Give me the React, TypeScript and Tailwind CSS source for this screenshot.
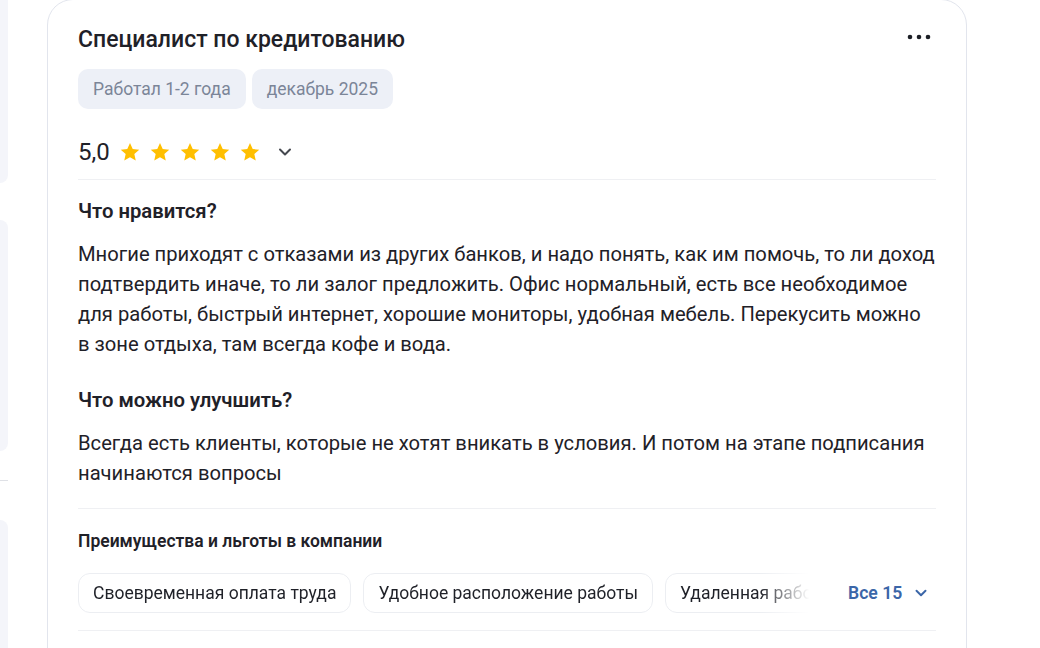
import React from 'react';
import { ChevronDown } from 'lucide-react';

const benefits = ["Своевременная оплата труда", "Удобное расположение работы", "Удаленная работа"];

const likedLines = [
    "Многие приходят с отказами из других банков, и надо понять, как им помочь, то ли доход",
    "подтвердить иначе, то ли залог предложить. Офис нормальный, есть все необходимое",
    "для работы, быстрый интернет, хорошие мониторы, удобная мебель. Перекусить можно",
    "в зоне отдыха, там всегда кофе и вода.",
];

const improveLines = [
    "Всегда есть клиенты, которые не хотят вникать в условия. И потом на этапе подписания",
    "начинаются вопросы",
];

const Star: React.FC = () => (
    <svg width="22" height="22" viewBox="0 0 24 24" className="shrink-0">
        <path d="M12 2.2l2.95 6.55 7.15.72-5.38 4.78 1.55 7.02L12 17.63l-6.27 3.64 1.55-7.02L1.9 9.47l7.15-.72L12 2.2z" fill="#ffbf00" />
    </svg>
);

const MoreDots: React.FC = () => (
    <svg width="24" height="6" viewBox="0 0 24 6">
        <circle cx="3" cy="3" r="2.3" fill="#1c1f26" />
        <circle cx="12" cy="3" r="2.3" fill="#1c1f26" />
        <circle cx="21" cy="3" r="2.3" fill="#1c1f26" />
    </svg>
);

const Lines: React.FC<{ lines: string[] }> = ({ lines }) => (
    <p className="mt-[16px] -mr-[30px] text-[20.2px] leading-[30px]">
        {lines.map((l, i) => <span key={i} className="block whitespace-nowrap">{l}</span>)}
    </p>
);

export default function App() {
    return (
        <div className="h-[648px] w-[1040px] overflow-hidden bg-white flex text-[#1f2128]" style={{ fontFamily: 'Roboto, "Noto Sans", sans-serif' }}>
            {/* left column edge */}
            <div className="w-[8px] shrink-0 flex flex-col">
                <div className="h-[183px] bg-[#f4f5fa] rounded-br-[16px]" />
                <div className="mt-[37px] h-[231px] bg-[#f4f5fa] rounded-r-[16px]" />
                <div className="mt-[29px] h-px bg-[#dfe1e6]" />
                <div className="mt-[39px] flex-1 bg-[#f4f5fa] rounded-tr-[16px]" />
            </div>

            <div className="ml-[39px] w-[920px] shrink-0 h-[700px] -mt-[1px] border border-[#e2e5ed] rounded-t-[26px] px-[30px] pt-[26px]">
                <div className="flex items-center justify-between h-[28px]">
                    <h2 className="text-[23px] leading-[28px] font-medium">Специалист по кредитованию</h2>
                    <button className="mr-[5px] -mt-[6px]"><MoreDots /></button>
                </div>

                <div className="mt-[15px] flex gap-[6px]">
                    <span className="h-[40px] px-[15px] flex items-center rounded-[10px] bg-[#edf0f7] text-[17.5px] text-[#7b8598]">Работал 1-2 года</span>
                    <span className="h-[40px] px-[15px] flex items-center rounded-[10px] bg-[#edf0f7] text-[17.5px] text-[#7b8598]">декабрь 2025</span>
                </div>

                <div className="mt-[23px] h-[40px] flex items-center">
                    <span className="text-[24px] leading-none">5,0</span>
                    <div className="ml-[9px] flex gap-[8px]">
                        <Star /><Star /><Star /><Star /><Star />
                    </div>
                    <ChevronDown size={20} strokeWidth={2.4} className="ml-[14px] text-[#45484f]" />
                </div>

                <div className="mt-[7px] h-px bg-[#eff0f3]" />

                <h3 className="mt-[19px] text-[20.3px] leading-[24px] font-semibold">Что нравится?</h3>
                <Lines lines={likedLines} />

                <h3 className="mt-[29px] text-[20.3px] leading-[24px] font-semibold">Что можно улучшить?</h3>
                <Lines lines={improveLines} />

                <div className="mt-[20px] h-px bg-[#eff0f3]" />

                <h4 className="mt-[21px] text-[17.5px] leading-[22px] font-semibold">Преимущества и льготы в компании</h4>

                <div className="mt-[21px] flex items-center">
                    <div className="w-[731px] flex gap-[12px] overflow-hidden [mask-image:linear-gradient(to_right,black_calc(100%-50px),transparent)]">
                        {benefits.map(b => (
                            <span key={b} className="shrink-0 h-[40px] px-[14px] flex items-center rounded-[12px] border border-[#eceef2] text-[17.5px] whitespace-nowrap">{b}</span>
                        ))}
                    </div>
                    <button className="ml-[39px] flex items-center gap-[10px] text-[17.6px] font-semibold text-[#3b66a8]">
                        Все 15
                        <ChevronDown size={18} strokeWidth={2.6} />
                    </button>
                </div>

                <div className="mt-[17px] h-px bg-[#eff0f3]" />
            </div>
        </div>
    );
}
